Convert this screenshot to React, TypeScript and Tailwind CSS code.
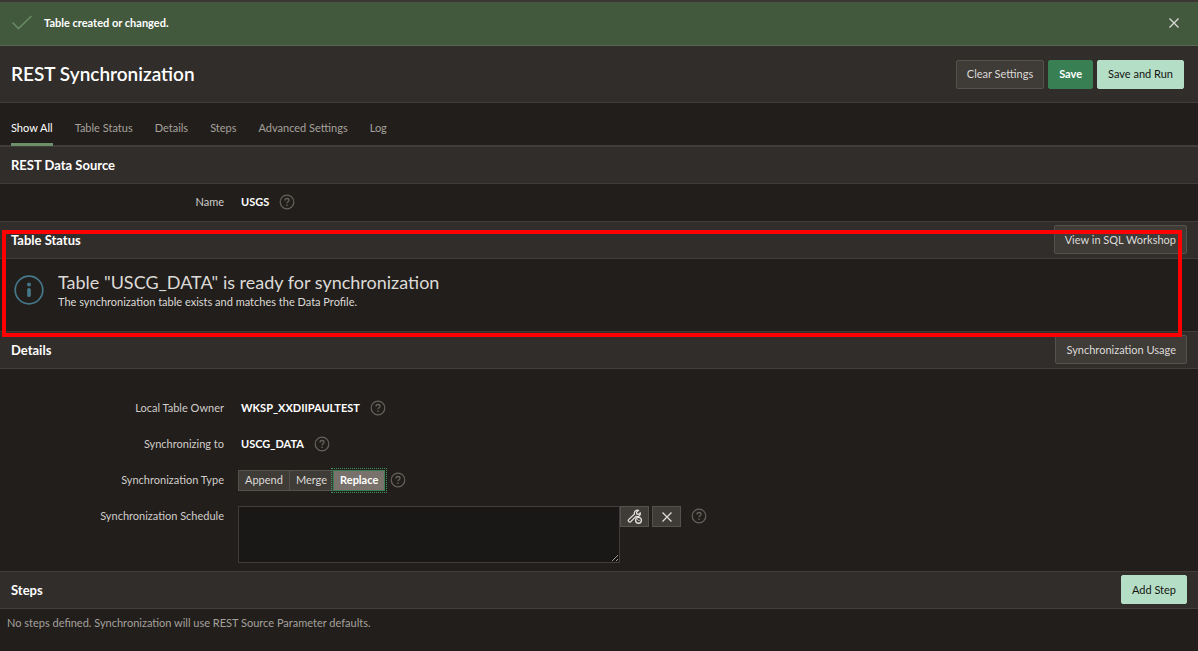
import React from 'react';

const tabs = ['Show All', 'Table Status', 'Details', 'Steps', 'Advanced Settings', 'Log'];
const syncTypes = ['Append', 'Merge', 'Replace'];

const variants = {
  normal: 'bg-[#3f3b37] border-[#55514d] text-[#dcdad7]',
  primary: 'bg-[#387f54] border-[#387f54] text-white font-bold',
  hot: 'bg-[#b4dfc6] border-[#b4dfc6] text-[#161513]',
};

type ButtonProps = {
  variant?: keyof typeof variants;
  children: React.ReactNode;
};

const Button: React.FC<ButtonProps> = ({ variant = 'normal', children }) => (
  <button type="button" className={`h-[29px] px-[10px] border rounded-[2px] whitespace-nowrap ${variants[variant]}`}>
    {children}
  </button>
);

const HelpButton: React.FC<{ label: string }> = ({ label }) => (
  <button type="button" aria-label={`Help: ${label}`} className="text-[#66625e]">
    <svg width="16" height="16" viewBox="0 0 16 16" fill="none" stroke="currentColor">
      <circle cx="8" cy="8" r="6.8" strokeWidth="1.2" />
      <path d="M6 6.4C6 5.2 6.8 4.5 8 4.5s2 .7 2 1.8c0 1.4-2 1.4-2 3" strokeWidth="1.3" />
      <path d="M8 10.5v1.4" strokeWidth="1.4" />
    </svg>
  </button>
);

const CloseIcon: React.FC = () => (
  <svg width="12" height="12" viewBox="0 0 12 12" fill="none" stroke="currentColor" strokeWidth="1.3">
    <path d="M1.5 1.5l9 9M10.5 1.5l-9 9" />
  </svg>
);

const WrenchClockIcon: React.FC = () => (
  <svg width="16" height="16" viewBox="0 0 16 16" fill="none" stroke="currentColor">
    <path
      d="M11.4 1.4a3 3 0 0 0-3.9 3.7L1.6 10.6a1.5 1.5 0 0 0 2.1 2.1L9 7.4a3 3 0 0 0 4.2-3.5l-1.9 1.5-1.5-.5-.3-1.6z"
      strokeWidth="1.3"
    />
    <circle cx="11.5" cy="11.3" r="2.9" fill="#3f3b37" strokeWidth="1.4" />
    <path d="M10.2 10l1.4 1.4h1" strokeWidth="1" />
  </svg>
);

type RegionProps = {
  title: string;
  action?: React.ReactNode;
  children: React.ReactNode;
};

const Region: React.FC<RegionProps> = ({ title, action, children }) => (
  <section className="relative">
    <div className="flex items-center justify-between h-[38px] px-[11px] pb-px bg-[#312d2a] border-y border-[#413d3a]">
      <h2 className="text-[13px] leading-4 font-bold text-white">{title}</h2>
      {action}
    </div>
    {children}
  </section>
);

type FieldProps = {
  label: string;
  htmlFor?: string;
  children: React.ReactNode;
};

const Field: React.FC<FieldProps> = ({ label, htmlFor, children }) => (
  <div className="flex items-start">
    <label htmlFor={htmlFor} className="w-[238px] shrink-0 pr-[14px] text-right leading-9">
      {label}
    </label>
    {children}
  </div>
);

const ReadOnlyField: React.FC<{ label: string; id: string; value: string }> = ({ label, id, value }) => (
  <Field label={label} htmlFor={id}>
    <div className="flex items-center gap-[10px] h-9 pl-[3px]">
      <output id={id} className="font-bold text-white">{value}</output>
      <HelpButton label={label} />
    </div>
  </Field>
);

export default function App() {
  const [syncType, setSyncType] = React.useState('Replace');

  return (
    <div className="min-h-screen overflow-x-hidden bg-[#221e1b] font-[Lato,sans-serif] text-[11px] leading-4 text-[#d0cdca]">
      {/* Success message */}
      <div role="status" className="flex items-center h-[46px] pl-3 pr-[18px] pb-[2px] bg-[#43593e] border-t-2 border-b border-t-[#3a3633] border-b-[#566a51]">
        <svg width="20" height="16" viewBox="0 0 20 16" fill="none" stroke="#6b8f66" strokeWidth="1.4">
          <path d="M.5 7.5l6 6 13-12.5" />
        </svg>
        <p className="flex-1 pl-3 font-bold text-white">Table created or changed.</p>
        <button type="button" aria-label="Close" className="text-[#dcdad7]">
          <CloseIcon />
        </button>
      </div>

      <header className="flex items-center justify-between h-[57px] pl-[11px] pr-[14px] bg-[#312d2a] border-b border-[#413d3a]">
        <h1 className="text-[19px] leading-6 font-semibold text-white">REST Synchronization</h1>
        <div className="flex gap-1">
          <Button>Clear Settings</Button>
          <Button variant="primary">Save</Button>
          <Button variant="hot">Save and Run</Button>
        </div>
      </header>

      <nav className="flex gap-[22px] h-[43px] px-[11px] border-b border-[#413d3a] text-[#a5a19d]">
        {tabs.map((tab, idx) => (
          <a
            key={tab}
            href="#"
            className={`-mb-px pt-[17px] border-b-[3px] ${idx === 0 ? 'border-[#6b8f66] text-white' : 'border-transparent'}`}
          >
            {tab}
          </a>
        ))}
      </nav>

      <Region title="REST Data Source">
        <div className="pb-px">
          <ReadOnlyField label="Name" id="source-name" value="USGS" />
        </div>
      </Region>

      <Region title="Table Status" action={<Button>View in SQL Workshop</Button>}>
        <div className="flex items-start gap-[14px] h-[72px] pt-[11px] pl-[14px]">
          <svg width="30" height="30" viewBox="0 0 30 30" className="mt-[5px] text-[#44788a]" fill="currentColor">
            <circle cx="15" cy="15" r="13.8" fill="none" stroke="currentColor" strokeWidth="1.7" />
            <circle cx="15" cy="9.4" r="2" />
            <rect x="13.2" y="13" width="3.6" height="9" rx="1.6" />
          </svg>
          <div>
            <h3 className="text-lg leading-6 text-[#dcdad7]">Table "USCG_DATA" is ready for synchronization</h3>
            <p className="text-[#dcdad7]">The synchronization table exists and matches the Data Profile.</p>
          </div>
        </div>
        {/* Highlight frame */}
        <div className="absolute z-10 top-[9px] left-[2px] right-4 -bottom-[6px] border-4 border-[#ff0000] pointer-events-none"></div>
      </Region>

      <Region title="Details" action={<Button>Synchronization Usage</Button>}>
        <div className="pt-[21px]">
          <ReadOnlyField label="Local Table Owner" id="table-owner" value="WKSP_XXDIIPAULTEST" />
          <ReadOnlyField label="Synchronizing to" id="sync-table" value="USCG_DATA" />

          <Field label="Synchronization Type">
            <div className="flex items-center gap-[5px] h-9">
              <div role="radiogroup" aria-label="Synchronization Type" className="flex">
                {syncTypes.map((type) => (
                  <label
                    key={type}
                    className={`h-[21px] px-[6px] border leading-[18px] ${
                      syncType === type
                        ? 'bg-[#79716b] border-[#387f54] text-white font-bold outline-1 outline-dotted outline-offset-1 outline-[#3f9463]'
                        : 'bg-[#3f3b37] border-[#55514d] border-r-0 text-[#dcdad7]'
                    }`}
                  >
                    <input
                      type="radio"
                      name="sync-type"
                      className="sr-only"
                      checked={syncType === type}
                      onChange={() => setSyncType(type)}
                    />
                    {type}
                  </label>
                ))}
              </div>
              <HelpButton label="Synchronization Type" />
            </div>
          </Field>

          <Field label="Synchronization Schedule" htmlFor="sync-schedule">
            <div className="flex items-start pt-2 pb-2">
              <textarea id="sync-schedule" className="block w-[382px] h-[57px] bg-[#191816] border border-[#413d3a]" />
              <button type="button" aria-label="Build schedule" className="flex items-center justify-center w-[29px] h-[21px] bg-[#3f3b37] border border-[#55514d] text-[#dcdad7]">
                <WrenchClockIcon />
              </button>
              <button type="button" aria-label="Clear schedule" className="flex items-center justify-center w-[29px] h-[21px] ml-[3px] mr-[10px] bg-[#3f3b37] border border-[#55514d] text-[#dcdad7]">
                <CloseIcon />
              </button>
              <div className="flex items-center h-5">
                <HelpButton label="Synchronization Schedule" />
              </div>
            </div>
          </Field>
        </div>
      </Region>

      <Region title="Steps" action={<Button variant="hot">Add Step</Button>}>
        <p className="px-[7px] py-[6px] text-[#a5a19d]">No steps defined. Synchronization will use REST Source Parameter defaults.</p>
      </Region>
    </div>
  );
}
